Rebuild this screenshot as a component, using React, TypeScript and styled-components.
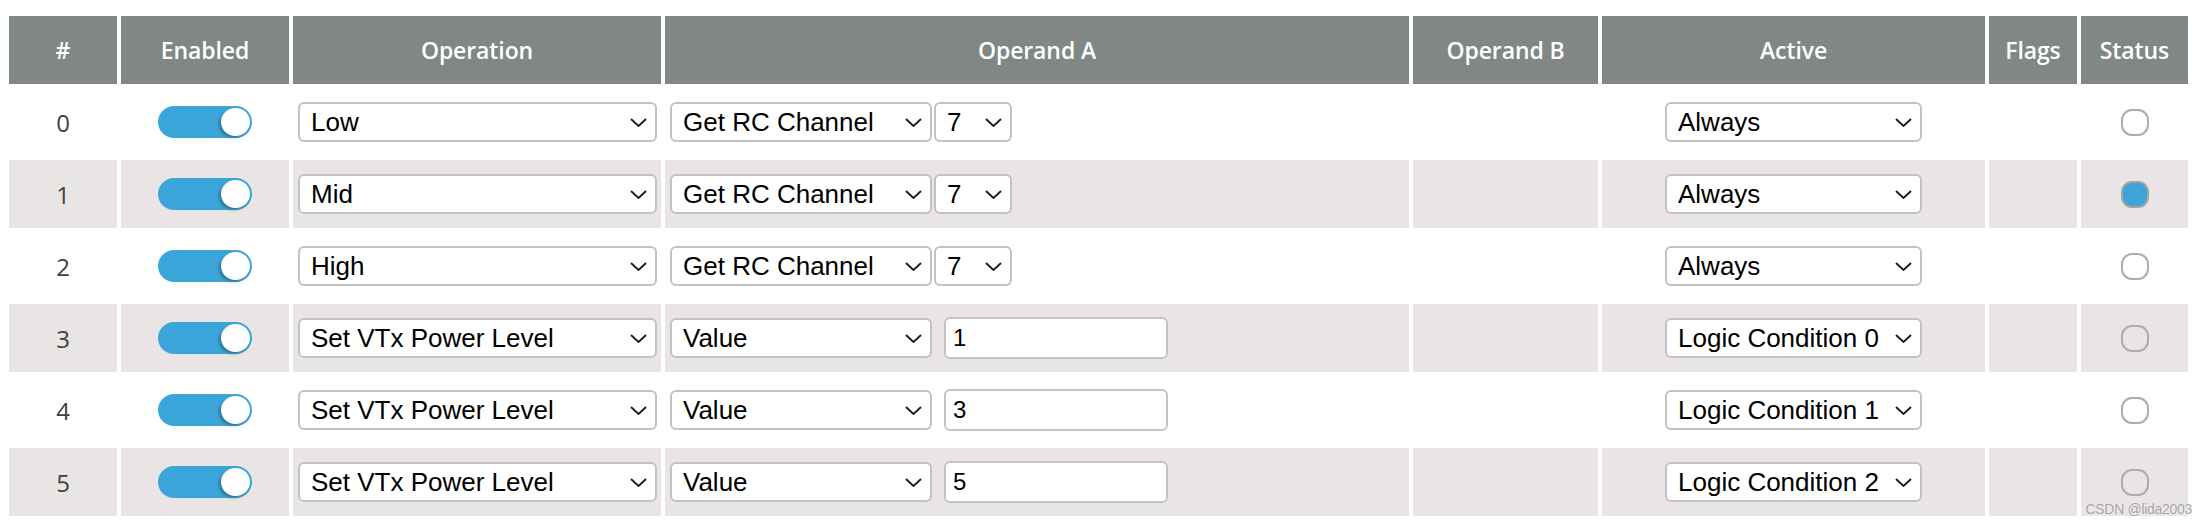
import React from 'react'
import styled, { createGlobalStyle } from 'styled-components'

const GlobalStyle = createGlobalStyle`
  html, body {
    margin: 0;
    padding: 0;
    background: #fff;
  }
  body {
    font-family: "Open Sans", "Liberation Sans", sans-serif;
  }
`;

const COLUMNS = '108px 168px 368px 744px 185px 383px 88px 107px';

const Page = styled.div`
  position: relative;
  width: 2207px;
  height: 526px;
  padding: 16px 0 0 9px;
  box-sizing: border-box;
`;

const Table = styled.div`
  display: flex;
  flex-direction: column;
  gap: 4px;
`;

const Row = styled.div`
  display: grid;
  grid-template-columns: ${COLUMNS};
  column-gap: 4px;
`;

const HeadCell = styled.div`
  height: 68px;
  background: #808784;
  color: #fff;
  font-family: "Open Sans", sans-serif;
  font-weight: 600;
  font-size: 23px;
  letter-spacing: -0.1px;
  display: flex;
  align-items: center;
  justify-content: center;
`;

const Cell = styled.div<{ $striped: boolean; $align?: 'center' | 'start' }>`
  height: 68px;
  background: ${p => (p.$striped ? '#e8e5e4' : '#fff')};
  display: flex;
  align-items: center;
  justify-content: ${p => (p.$align === 'start' ? 'flex-start' : 'center')};
  padding: ${p => (p.$align === 'start' ? '0 0 0 5px' : '0')};
  gap: 2px;
  box-sizing: border-box;
`;

const Index = styled.span`
  font-family: "Open Sans", sans-serif;
  font-size: 24px;
  color: #404040;
`;

const Toggle = styled.div`
  width: 94px;
  height: 32px;
  border-radius: 16px;
  background: #3ba5da;
  display: flex;
  align-items: center;
  justify-content: flex-end;
  padding-right: 2px;
  box-sizing: border-box;
`;

const Knob = styled.div`
  width: 29px;
  height: 28px;
  border-radius: 50%;
  background: #fff;
  box-shadow: -2px 2px 3px rgba(0, 0, 0, 0.28);
`;

const SelectWrap = styled.div<{ $width: number }>`
  position: relative;
  width: ${p => p.$width}px;
  height: 40px;
`;

const Select = styled.select`
  appearance: none;
  -webkit-appearance: none;
  width: 100%;
  height: 100%;
  margin: 0;
  border: 2px solid #c2c2c2;
  border-radius: 6px;
  background: #fff;
  padding: 0 30px 0 11px;
  font-family: "Liberation Sans", Arial, sans-serif;
  font-size: 26px;
  color: #000;
  outline: none;
`;

const Chevron = styled.svg`
  position: absolute;
  right: 10px;
  top: 50%;
  margin-top: -4px;
  pointer-events: none;
`;

const NumberInput = styled.input`
  width: 224px;
  height: 42px;
  margin: 0 0 0 10px;
  box-sizing: border-box;
  border: 2px solid #c4c4c4;
  border-radius: 6px;
  background: #fff;
  padding: 0 0 0 7px;
  font-family: "Liberation Sans", Arial, sans-serif;
  font-size: 24px;
  color: #000;
  outline: none;
`;

const Radio = styled.div<{ $checked: boolean }>`
  width: 28px;
  height: 27px;
  box-sizing: border-box;
  border-radius: 11px;
  border: 2px solid ${p => (p.$checked ? '#a3a3a3' : '#acacac')};
  background: ${p => (p.$checked ? '#3ba5da' : 'transparent')};
`;

const Watermark = styled.div`
  position: absolute;
  right: 15px;
  bottom: 9px;
  font-family: "Liberation Sans", Arial, sans-serif;
  font-size: 14px;
  letter-spacing: -0.3px;
  color: #a3a3a3;
  text-shadow: 0 0 2px #fff;
`;

const Dropdown: React.FC<{ value: string; width: number }> = ({ value, width }) => (
  <SelectWrap $width={width}>
    <Select defaultValue={value}>
      <option value={value}>{value}</option>
    </Select>
    <Chevron width="17" height="9" viewBox="0 0 17 9">
      <polyline points="1,1 8.5,8 16,1" fill="none" stroke="#1a1a1a" strokeWidth="1.8" />
    </Chevron>
  </SelectWrap>
);

type Condition = {
  operation: string
  operandA: string
  channel?: string
  value?: string
  active: string
  status: boolean
};

const conditions: Condition[] = [
  { operation: 'Low', operandA: 'Get RC Channel', channel: '7', active: 'Always', status: false },
  { operation: 'Mid', operandA: 'Get RC Channel', channel: '7', active: 'Always', status: true },
  { operation: 'High', operandA: 'Get RC Channel', channel: '7', active: 'Always', status: false },
  { operation: 'Set VTx Power Level', operandA: 'Value', value: '1', active: 'Logic Condition 0', status: false },
  { operation: 'Set VTx Power Level', operandA: 'Value', value: '3', active: 'Logic Condition 1', status: false },
  { operation: 'Set VTx Power Level', operandA: 'Value', value: '5', active: 'Logic Condition 2', status: false },
];

const headers = ['#', 'Enabled', 'Operation', 'Operand A', 'Operand B', 'Active', 'Flags', 'Status'];

const App: React.FC = () => {
  return (
    <Page>
      <GlobalStyle />
      <Table>
        <Row>
          {headers.map(h => (
            <HeadCell key={h}>{h}</HeadCell>
          ))}
        </Row>
        {conditions.map((c, i) => {
          const striped = i % 2 === 1
          return (
            <Row key={i}>
              <Cell $striped={striped}>
                <Index>{i}</Index>
              </Cell>
              <Cell $striped={striped}>
                <Toggle>
                  <Knob />
                </Toggle>
              </Cell>
              <Cell $striped={striped} $align="start">
                <Dropdown value={c.operation} width={359} />
              </Cell>
              <Cell $striped={striped} $align="start">
                <Dropdown value={c.operandA} width={262} />
                {c.channel && <Dropdown value={c.channel} width={78} />}
                {c.value && <NumberInput type="number" defaultValue={c.value} />}
              </Cell>
              <Cell $striped={striped} />
              <Cell $striped={striped}>
                <Dropdown value={c.active} width={257} />
              </Cell>
              <Cell $striped={striped} />
              <Cell $striped={striped}>
                <Radio $checked={c.status} />
              </Cell>
            </Row>
          )
        })}
      </Table>
      <Watermark>CSDN @lida2003</Watermark>
    </Page>
  )
}

export default App;
